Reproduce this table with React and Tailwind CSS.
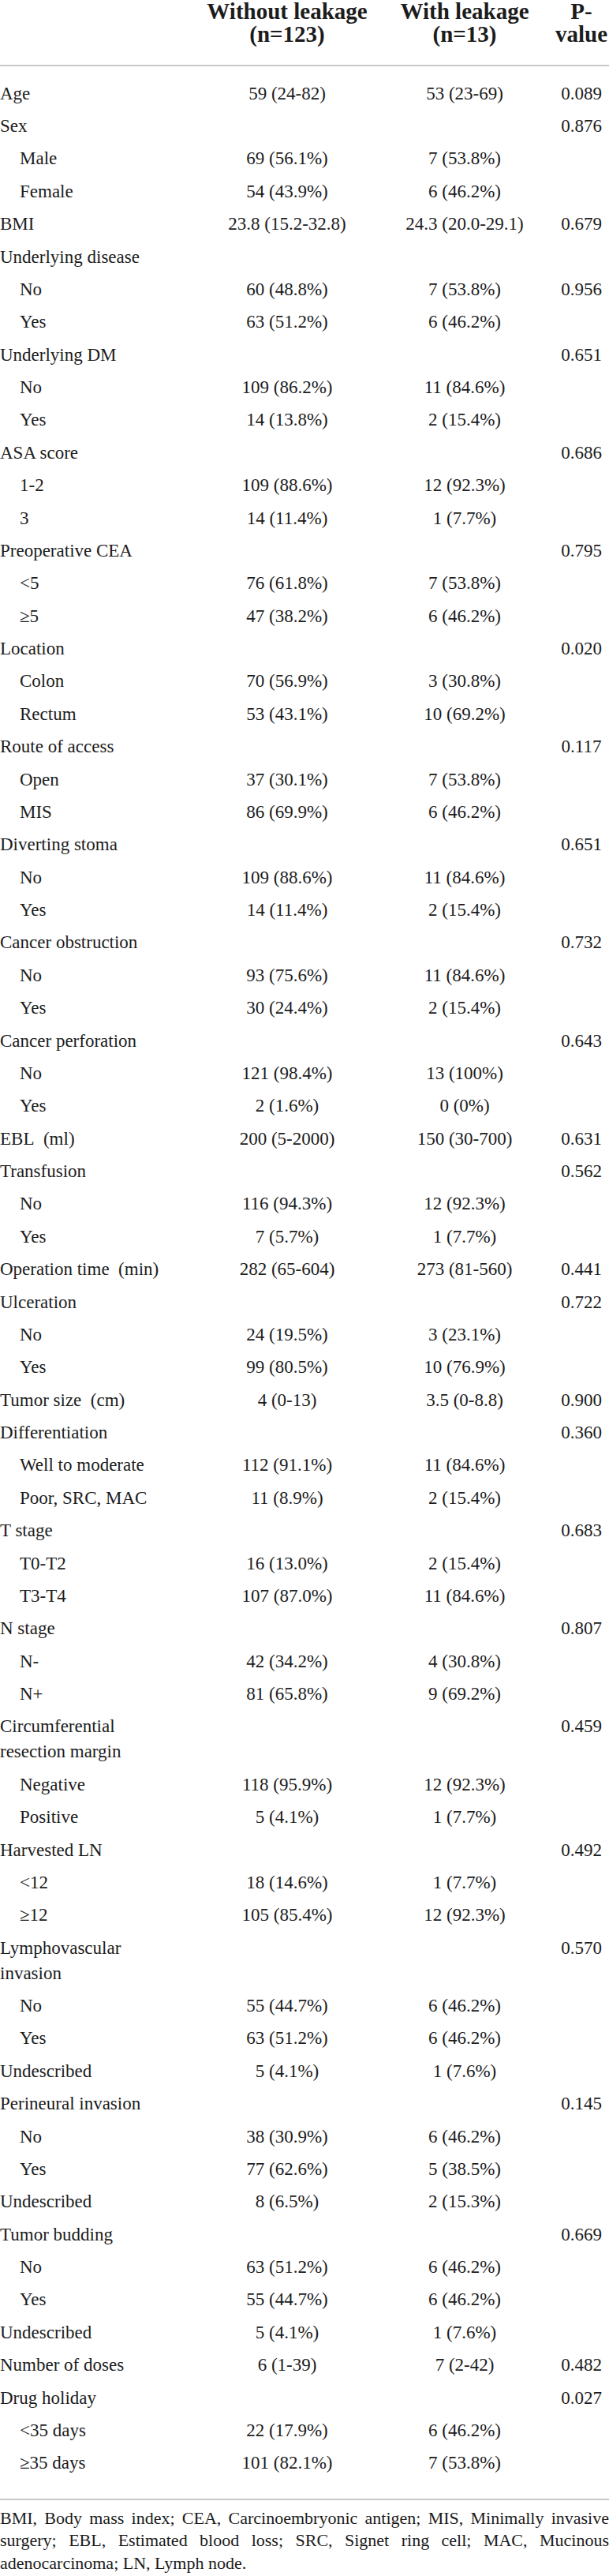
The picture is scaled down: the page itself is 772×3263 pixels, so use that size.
import React from 'react'

// [label, without leakage, with leakage, p-value, indented]
const rows = [
  ['Age', '59 (24-82)', '53 (23-69)', '0.089'],
  ['Sex', '', '', '0.876'],
  ['Male', '69 (56.1%)', '7 (53.8%)', '', true],
  ['Female', '54 (43.9%)', '6 (46.2%)', '', true],
  ['BMI', '23.8 (15.2-32.8)', '24.3 (20.0-29.1)', '0.679'],
  ['Underlying disease', '', '', ''],
  ['No', '60 (48.8%)', '7 (53.8%)', '0.956', true],
  ['Yes', '63 (51.2%)', '6 (46.2%)', '', true],
  ['Underlying DM', '', '', '0.651'],
  ['No', '109 (86.2%)', '11 (84.6%)', '', true],
  ['Yes', '14 (13.8%)', '2 (15.4%)', '', true],
  ['ASA score', '', '', '0.686'],
  ['1-2', '109 (88.6%)', '12 (92.3%)', '', true],
  ['3', '14 (11.4%)', '1 (7.7%)', '', true],
  ['Preoperative CEA', '', '', '0.795'],
  ['<5', '76 (61.8%)', '7 (53.8%)', '', true],
  ['≥5', '47 (38.2%)', '6 (46.2%)', '', true],
  ['Location', '', '', '0.020'],
  ['Colon', '70 (56.9%)', '3 (30.8%)', '', true],
  ['Rectum', '53 (43.1%)', '10 (69.2%)', '', true],
  ['Route of access', '', '', '0.117'],
  ['Open', '37 (30.1%)', '7 (53.8%)', '', true],
  ['MIS', '86 (69.9%)', '6 (46.2%)', '', true],
  ['Diverting stoma', '', '', '0.651'],
  ['No', '109 (88.6%)', '11 (84.6%)', '', true],
  ['Yes', '14 (11.4%)', '2 (15.4%)', '', true],
  ['Cancer obstruction', '', '', '0.732'],
  ['No', '93 (75.6%)', '11 (84.6%)', '', true],
  ['Yes', '30 (24.4%)', '2 (15.4%)', '', true],
  ['Cancer perforation', '', '', '0.643'],
  ['No', '121 (98.4%)', '13 (100%)', '', true],
  ['Yes', '2 (1.6%)', '0 (0%)', '', true],
  ['EBL\u00a0\u00a0(ml)', '200 (5-2000)', '150 (30-700)', '0.631'],
  ['Transfusion', '', '', '0.562'],
  ['No', '116 (94.3%)', '12 (92.3%)', '', true],
  ['Yes', '7 (5.7%)', '1 (7.7%)', '', true],
  ['Operation time\u00a0\u00a0(min)', '282 (65-604)', '273 (81-560)', '0.441'],
  ['Ulceration', '', '', '0.722'],
  ['No', '24 (19.5%)', '3 (23.1%)', '', true],
  ['Yes', '99 (80.5%)', '10 (76.9%)', '', true],
  ['Tumor size\u00a0\u00a0(cm)', '4 (0-13)', '3.5 (0-8.8)', '0.900'],
  ['Differentiation', '', '', '0.360'],
  ['Well to moderate', '112 (91.1%)', '11 (84.6%)', '', true],
  ['Poor, SRC, MAC', '11 (8.9%)', '2 (15.4%)', '', true],
  ['T stage', '', '', '0.683'],
  ['T0-T2', '16 (13.0%)', '2 (15.4%)', '', true],
  ['T3-T4', '107 (87.0%)', '11 (84.6%)', '', true],
  ['N stage', '', '', '0.807'],
  ['N-', '42 (34.2%)', '4 (30.8%)', '', true],
  ['N+', '81 (65.8%)', '9 (69.2%)', '', true],
  ['Circumferential resection margin', '', '', '0.459'],
  ['Negative', '118 (95.9%)', '12 (92.3%)', '', true],
  ['Positive', '5 (4.1%)', '1 (7.7%)', '', true],
  ['Harvested LN', '', '', '0.492'],
  ['<12', '18 (14.6%)', '1 (7.7%)', '', true],
  ['≥12', '105 (85.4%)', '12 (92.3%)', '', true],
  ['Lymphovascular invasion', '', '', '0.570'],
  ['No', '55 (44.7%)', '6 (46.2%)', '', true],
  ['Yes', '63 (51.2%)', '6 (46.2%)', '', true],
  ['Undescribed', '5 (4.1%)', '1 (7.6%)', ''],
  ['Perineural invasion', '', '', '0.145'],
  ['No', '38 (30.9%)', '6 (46.2%)', '', true],
  ['Yes', '77 (62.6%)', '5 (38.5%)', '', true],
  ['Undescribed', '8 (6.5%)', '2 (15.3%)', ''],
  ['Tumor budding', '', '', '0.669'],
  ['No', '63 (51.2%)', '6 (46.2%)', '', true],
  ['Yes', '55 (44.7%)', '6 (46.2%)', '', true],
  ['Undescribed', '5 (4.1%)', '1 (7.6%)', ''],
  ['Number of doses', '6 (1-39)', '7 (2-42)', '0.482'],
  ['Drug holiday', '', '', '0.027'],
  ['<35 days', '22 (17.9%)', '6 (46.2%)', '', true],
  ['≥35 days', '101 (82.1%)', '7 (53.8%)', '', true],
]

const cols = 'grid grid-cols-[252px_224px_226px_70px]'

export default function App() {
  return (
    <div className="w-[772px] bg-white text-[#1c1c1c] font-['Liberation_Serif',serif]">
      <div className={`${cols} h-[84px] text-[29px] leading-[29px] font-bold text-center border-b-2 border-[#c8c8c8]`}>
        <div />
        <div>Without leakage<br />(n=123)</div>
        <div>With leakage<br />(n=13)</div>
        <div>P-value</div>
      </div>

      <div className="pt-[14px] pb-[24px] text-[23px] leading-[32px] border-b-2 border-[#c8c8c8]">
        {rows.map(([label, a, b, p, indent], i) => (
          <div key={i} className={`${cols} py-[4.7px]`}>
            <div className={indent ? 'pl-[25px] pr-[20px]' : 'pr-[20px]'}>{label}</div>
            <div className="text-center">{a}</div>
            <div className="text-center">{b}</div>
            <div className="text-center">{p}</div>
          </div>
        ))}
      </div>

      <p className="pt-[9px] text-[22px] leading-[28.3px] text-justify">
        BMI, Body mass index; CEA, Carcinoembryonic antigen; MIS, Minimally invasive surgery; EBL, Estimated blood loss; SRC, Signet ring cell; MAC, Mucinous adenocarcinoma; LN, Lymph node.
      </p>
    </div>
  )
}
